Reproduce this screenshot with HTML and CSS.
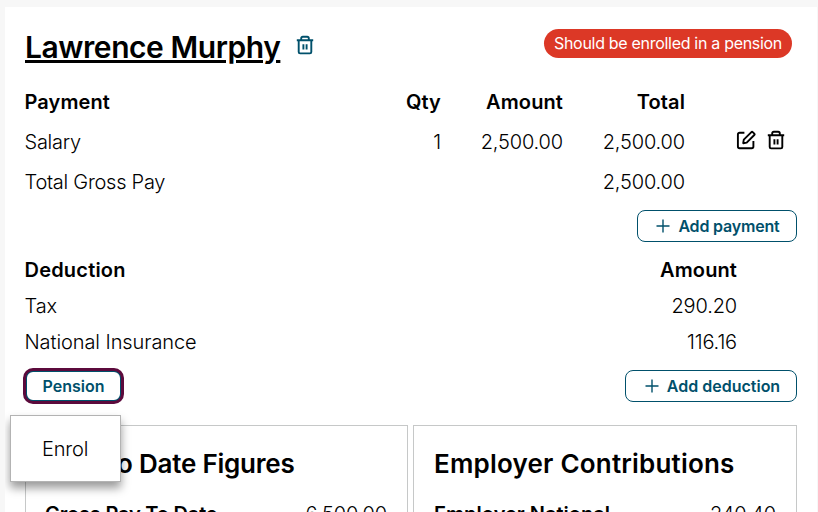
FILE: index.html
```
<!DOCTYPE html>
<html lang="en">
<head>
<meta charset="utf-8">
<title>Payslip</title>
<link rel="stylesheet" href="styles.css">
</head>
<body>
<svg class="sprite" aria-hidden="true">
  <symbol id="trash" viewBox="0 0 20 20"><path d="M1.8 5.3h16.4M6.2 5V3.4c0-1 .6-1.6 1.6-1.6h4.4c1 0 1.6.6 1.6 1.6V5M3.7 5.3V17c0 .9.6 1.4 1.4 1.4h9.8c.8 0 1.4-.5 1.4-1.4V5.3M8.4 9.2v5.4M11.6 9.2v5.4"/></symbol>
  <symbol id="edit" viewBox="0 0 20 20"><path d="M8.4 2.8H3.6c-1 0-1.7.7-1.7 1.7v12.1c0 1 .7 1.7 1.7 1.7h12.1c1 0 1.7-.7 1.7-1.7V11M7.2 13.2l.6-3.5 7.6-7.6c.4-.4.9-.4 1.3 0l1.6 1.6c.4.4.4.9 0 1.3l-7.6 7.6z"/></symbol>
  <symbol id="plus" viewBox="0 0 14 14"><path d="M7 .5v13M.5 7h13"/></symbol>
</svg>
<main class="panel">
  <header class="header">
    <h1 class="name">Lawrence Murphy</h1>
    <svg class="icon icon-brand"><use href="#trash"/></svg>
    <span class="badge">Should be enrolled in a pension</span>
  </header>

  <section class="payments">
    <div class="row head"><span>Payment</span><span class="num">Qty</span><span class="num">Amount</span><span class="num">Total</span></div>
    <div class="row"><span class="tight">Salary</span><span class="num">1</span><span class="num">2,500.00</span><span class="num">2,500.00</span>
      <span class="actions"><svg class="icon"><use href="#edit"/></svg><svg class="icon"><use href="#trash"/></svg></span></div>
    <div class="row"><span class="tight">Total Gross Pay</span><span></span><span></span><span class="num">2,500.00</span></div>
  </section>
  <div class="buttons end"><button class="btn add-payment"><svg class="plus"><use href="#plus"/></svg>Add payment</button></div>

  <section class="deductions">
    <div class="row head"><span>Deduction</span><span class="num">Amount</span></div>
    <div class="row"><span>Tax</span><span class="num">290.20</span></div>
    <div class="row"><span>National Insurance</span><span class="num">116.16</span></div>
  </section>
  <div class="buttons">
    <div class="dropdown"><button class="btn focused">Pension</button><div class="menu">Enrol</div></div>
    <button class="btn add-deduction"><svg class="plus"><use href="#plus"/></svg>Add deduction</button>
  </div>

  <section class="cards">
    <article class="card">
      <h2>Year to Date Figures</h2>
      <div class="figure"><b class="gross">Gross Pay To Date</b><span>6,500.00</span></div>
    </article>
    <article class="card">
      <h2 class="loose">Employer Contributions</h2>
      <div class="figure"><b>Employer National</b><span>240.40</span></div>
    </article>
  </section>
</main>
</body>
</html>
```
FILE: styles.css
```
* { box-sizing: border-box; }
body {
  margin: 0;
  height: 512px;
  overflow: hidden;
  padding: 7px 1px 0 5px;
  background: #f7f7f7;
  color: #000;
  font: 300 20px/24px Inter, sans-serif;
  letter-spacing: -0.15px;
}
.sprite { display: none; }
.panel { height: 505px; overflow: hidden; padding: 20px 20px 0; background: #fff; }
h1, h2 { margin: 0; font-weight: 600; }

.header { display: flex; height: 55px; padding-bottom: 14px; align-items: center; }
.name {
  margin-top: -2px;
  font-size: 30px;
  line-height: 40px;
  letter-spacing: -0.44px;
  text-decoration: underline;
  text-decoration-thickness: 3px;
  text-underline-offset: 2px;
}
.icon { width: 20px; height: 20px; fill: none; stroke: #000; stroke-width: 1.9; stroke-linejoin: round; }
.icon-brand { margin: -6px 0 0 15px; stroke: #00506b; }
.badge {
  margin: -8px 5px 0 auto;
  width: 248px;
  height: 29px;
  border-radius: 15px;
  background: #dc3826;
  color: #fff;
  font-size: 16px;
  font-weight: 400;
  line-height: 29px;
  letter-spacing: -0.3px;
  text-align: center;
  white-space: nowrap;
}

.row { display: grid; align-items: center; white-space: nowrap; }
.row > span:first-child { margin-left: -0.5px; }
.payments .row { grid-template-columns: 294px 122px 122px 122px 112px; height: 40px; }
.deductions { padding-top: 2px; }
.deductions .row { grid-template-columns: 612px 100px; height: 36px; }
.deductions .row > span:first-child { letter-spacing: -0.08px; }
.head { font-weight: 600; letter-spacing: 0.1px; }
.deductions .head > span:first-child { letter-spacing: 0.2px; }
.num { text-align: right; }
.tight { letter-spacing: -0.26px; }
.actions { display: flex; gap: 10px; padding-left: 51px; margin-top: -4px; }

.buttons { display: flex; justify-content: space-between; width: 772px; height: 50px; padding-top: 10px; }
.end { justify-content: flex-end; height: 48px; padding-top: 8px; }
.btn {
  display: flex;
  align-items: center;
  justify-content: center;
  height: 32px;
  padding: 0;
  border: 1px solid #00506b;
  border-radius: 8px;
  background: #fff;
  color: #00506b;
  font: 600 16px/20px Inter, sans-serif;
}
.plus { width: 14px; height: 14px; margin-right: 8px; fill: none; stroke: #00506b; stroke-width: 1.4; }
.add-payment { width: 160px; padding-left: 2px; letter-spacing: -0.18px; }
.add-deduction { width: 172px; padding-left: 3px; }
.dropdown { position: relative; }
.focused { width: 97px; outline: 3px solid #5c0a3c; outline-offset: -1px; border-width: 2px; }
.menu {
  position: absolute;
  z-index: 1;
  top: 45px;
  left: -15px;
  width: 111px;
  height: 67px;
  padding-left: 31px;
  border: 1px solid #b3b3b3;
  background: #fff;
  box-shadow: 0 6px 9px rgba(0, 0, 0, .4);
  line-height: 67px;
}

.cards { display: grid; grid-template-columns: 383px 384px; gap: 5px; width: 772px; margin-top: 15px; }
.card { height: 200px; padding: 18px 20px 0; border: 1px solid #c6c8c8; }
.card h2 { font-size: 26px; line-height: 40px; letter-spacing: -0.22px; white-space: nowrap; }
.card .loose { letter-spacing: 0.2px; }
.figure { display: flex; justify-content: space-between; margin-top: 18px; }
.figure b { font-weight: 600; letter-spacing: 0; }
.figure .gross { margin-left: -1px; letter-spacing: -0.2px; }
```
